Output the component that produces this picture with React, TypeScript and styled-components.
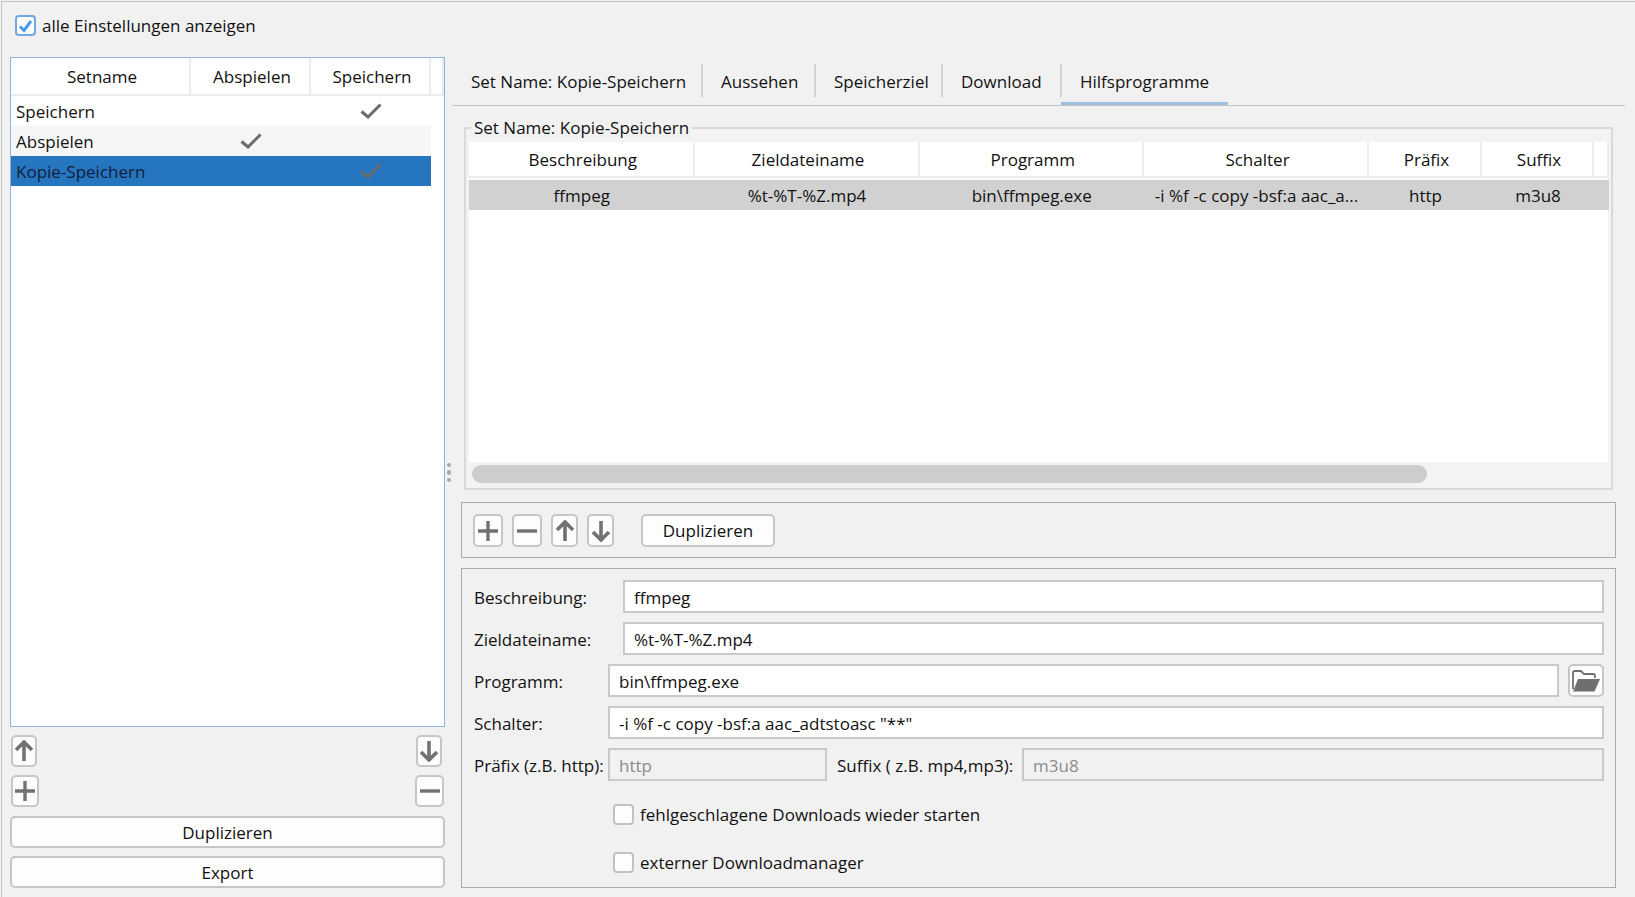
import styled, { createGlobalStyle } from 'styled-components';

const GlobalStyle = createGlobalStyle`
  html, body {
    margin: 0;
    padding: 0;
    background: #f1f1f1;
  }
  body {
    font-family: "Open Sans", "Liberation Sans", sans-serif;
    font-size: 17px;
    color: #111;
  }
  * { box-sizing: border-box; }
`;

const CheckMark = () => (
  <svg width="22" height="16" viewBox="0 0 22 16">
    <path d="M1.5 8.5 L8 14 L20.5 1.5" fill="none" stroke="#6b6b6b" strokeWidth="3" />
  </svg>
);

const ArrowIcon = ({ down }: { down?: boolean }) => (
  <svg width="20" height="22" viewBox="0 0 20 22">
    <path
      d={down ? 'M10 1 V20 M2 12 L10 20 L18 12' : 'M10 21 V2 M2 10 L10 2 L18 10'}
      fill="none"
      stroke="#727272"
      strokeWidth="3.6"
    />
  </svg>
);

const PlusIcon = () => (
  <svg width="22" height="22" viewBox="0 0 22 22">
    <path d="M1 11 H21 M11 1 V21" fill="none" stroke="#727272" strokeWidth="3.4" />
  </svg>
);

const MinusIcon = () => (
  <svg width="22" height="22" viewBox="0 0 22 22">
    <path d="M1 11 H21" fill="none" stroke="#727272" strokeWidth="3.4" />
  </svg>
);

const FolderIcon = () => (
  <svg width="28" height="22" viewBox="0 0 28 22">
    <path d="M1 19 V3 Q1 1 3 1 H9 L12 4 H21 Q23 4 23 6 V8" fill="none" stroke="#6f6f6f" strokeWidth="1.8" />
    <path d="M6 9 H28 L22.5 21.5 H1 Z" fill="#6f6f6f" />
  </svg>
);

const Page = styled.div`
  width: 1635px;
  height: 897px;
  overflow: hidden;
  border-top: 1px solid #c4c4c4;
  border-left: 1px solid #c4c4c4;
  margin-top: 1px;
  margin-left: 1px;
  display: flex;
  flex-direction: column;
`;

const TopBar = styled.div`
  height: 55px;
  flex: none;
  padding: 13px 0 0 13px;
  display: flex;
  align-items: flex-start;
  gap: 6px;
  line-height: 22px;
`;

const Box = styled.span<{ $checked?: boolean }>`
  display: inline-flex;
  align-items: center;
  justify-content: center;
  flex: none;
  width: 21px;
  height: 21px;
  border-radius: 4px;
  background: #fdfdfd;
  border: 2px solid ${(p) => (p.$checked ? '#6fa8e6' : '#c2c2c2')};
`;

const Body = styled.div`
  display: flex;
  padding-left: 8px;
  flex: none;
  height: 838px;
`;

const LeftPane = styled.div`
  width: 435px;
  display: flex;
  flex-direction: column;
`;

const SetTable = styled.div`
  height: 670px;
  flex: none;
  border: 1px solid #8db2df;
  background: #fff;
`;

const GridRow = styled.div<{ $cols: string }>`
  display: grid;
  grid-template-columns: ${(p) => p.$cols};
`;

const HeaderCell = styled.div<{ $height: number; $shift: number; $drop?: number }>`
  height: ${(p) => p.$height}px;
  padding: ${(p) => p.$drop ?? 0}px 0 0 ${(p) => p.$shift}px;
  display: flex;
  align-items: center;
  justify-content: center;
  border-right: 2px solid #ececec;
  border-bottom: 2px solid #ececec;
  white-space: nowrap;
`;

const SetRow = styled.div<{ $selected?: boolean; $alt?: boolean }>`
  display: grid;
  grid-template-columns: 179px 120px 120px;
  width: 420px;
  height: 30px;
  background: ${(p) => (p.$selected ? '#2675bf' : p.$alt ? '#f6f6f6' : '#fff')};
  color: ${(p) => (p.$selected ? '#11203a' : '#111')};
`;

const SetName = styled.div`
  padding-left: 5px;
  display: flex;
  align-items: center;
`;

const CheckCell = styled.div`
  display: flex;
  align-items: center;
  justify-content: center;
  padding-left: 2px;
`;

const ButtonRow = styled.div<{ $top: number; $pad: string }>`
  display: flex;
  flex: none;
  justify-content: space-between;
  margin-top: ${(p) => p.$top}px;
  padding: ${(p) => p.$pad};
`;

const IconButton = styled.button<{ $w: number; $h?: number }>`
  width: ${(p) => p.$w}px;
  height: ${(p) => p.$h ?? 33}px;
  padding: 0;
  display: flex;
  align-items: center;
  justify-content: center;
  flex: none;
  background: #fdfdfd;
  border: 2px solid #c6c6c6;
  border-radius: 5px;
`;

const TextButton = styled.button<{ $w?: number; $h?: number; $top?: number; $left?: number }>`
  width: ${(p) => (p.$w ? `${p.$w}px` : '100%')};
  height: ${(p) => p.$h ?? 33}px;
  margin-top: ${(p) => p.$top ?? 0}px;
  margin-left: ${(p) => p.$left ?? 0}px;
  padding: 0;
  flex: none;
  font: inherit;
  color: inherit;
  background: #fdfdfd;
  border: 2px solid #c6c6c6;
  border-radius: 5px;
`;

const Splitter = styled.div`
  width: 7px;
  height: 831px;
  display: flex;
  flex-direction: column;
  align-items: center;
  justify-content: center;
  gap: 3px;
  padding-left: 1px;
`;

const Dot = styled.span`
  width: 4.5px;
  height: 4.5px;
  border-radius: 50%;
  background: #a9a9a9;
`;

const RightPane = styled.div`
  width: 1173px;
  padding-top: 7px;
`;

const TabBar = styled.div`
  display: flex;
  height: 42px;
  padding-left: 1px;
  border-bottom: 1px solid #c4c4c4;
`;

const Tab = styled.div<{ $w: number; $active?: boolean }>`
  position: relative;
  width: ${(p) => p.$w}px;
  height: 33px;
  padding: 2px 0 0 18px;
  display: flex;
  align-items: center;
  white-space: nowrap;
  border-right: ${(p) => (p.$active ? 'none' : '2px solid #d2d2d2')};

  ${(p) =>
    p.$active &&
    `&::after {
      content: '';
      position: absolute;
      left: -1px;
      right: 1px;
      bottom: -8px;
      height: 3px;
      background: #9dbfe2;
    }`}
`;

const GroupBox = styled.div`
  position: relative;
  margin: 21px 0 0 12px;
  width: 1149px;
  height: 363px;
  padding: 13px 3px 0;
  border: 2px solid #d9d9d9;
  background: #f3f3f3;
`;

const GroupTitle = styled.span`
  position: absolute;
  top: -12px;
  left: 5px;
  padding: 0 3px;
  line-height: 22px;
  background: #f1f1f1;
`;

const ToolTable = styled.div`
  height: 320px;
  background: #fff;
`;

const ToolRow = styled.div`
  display: grid;
  grid-template-columns: 225.5px 225px 224.5px 225px 113px 112px;
  width: 1140px;
  height: 30px;
  margin-top: 2px;
  background: #d1d1d1;
`;

const ToolCell = styled.div`
  display: flex;
  align-items: center;
  justify-content: center;
  overflow: hidden;
  white-space: nowrap;
`;

const ScrollTrack = styled.div`
  padding: 3px 0 0 3px;
`;

const ScrollThumb = styled.div`
  width: 955px;
  height: 18px;
  border-radius: 9px;
  background: #cdcdcd;
`;

const Panel = styled.div<{ $top: number }>`
  margin: ${(p) => p.$top}px 0 0 9px;
  width: 1155px;
  border: 1px solid #ababab;
`;

const Toolbar = styled(Panel)`
  height: 56px;
  padding: 11px;
  display: flex;
  gap: 9px;
`;

const Form = styled(Panel)`
  height: 320px;
  padding: 11px 11px 0 12px;
  display: flex;
  flex-direction: column;
  gap: 9px;
`;

const FormRow = styled.div`
  display: flex;
  align-items: stretch;
  gap: 9px;
`;

const Label = styled.label<{ $w: number; $left?: number }>`
  width: ${(p) => p.$w}px;
  margin: 0 -9px 0 ${(p) => p.$left ?? 0}px;
  padding-top: 1px;
  flex: none;
  display: flex;
  align-items: center;
  white-space: nowrap;
`;

const Field = styled.div<{ $disabled?: boolean; $w?: number }>`
  height: 33px;
  padding: 1px 0 0 9px;
  display: flex;
  align-items: center;
  white-space: nowrap;
  ${(p) => (p.$w ? `width: ${p.$w}px; flex: none;` : 'flex: 1;')}
  background: ${(p) => (p.$disabled ? '#f1f1f1' : '#fff')};
  color: ${(p) => (p.$disabled ? '#8c8c8c' : '#111')};
  border: 2px solid #c9c9c9;
`;

const CheckRow = styled.label<{ $top: number }>`
  display: flex;
  align-items: center;
  gap: 6px;
  height: 21px;
  margin: ${(p) => p.$top}px 0 0 139px;
  white-space: nowrap;
`;

const tabs = [
  { label: 'Set Name: Kopie-Speichern', width: 250 },
  { label: 'Aussehen', width: 113 },
  { label: 'Speicherziel', width: 127 },
  { label: 'Download', width: 119 },
  { label: 'Hilfsprogramme', width: 167, active: true },
];

const sets = [
  { name: 'Speichern', play: false, save: true },
  { name: 'Abspielen', play: true, save: false, alt: true },
  { name: 'Kopie-Speichern', play: false, save: true, selected: true },
];

const toolHeaders = ['Beschreibung', 'Zieldateiname', 'Programm', 'Schalter', 'Präfix', 'Suffix', ''];
const toolValues = ['ffmpeg', '%t-%T-%Z.mp4', 'bin\\ffmpeg.exe', '-i %f -c copy -bsf:a aac_a...', 'http', 'm3u8'];

export default function App() {
  return (
    <>
      <GlobalStyle />
      <Page>
        <TopBar>
          <Box $checked>
            <svg width="15" height="14" viewBox="0 0 15 14">
              <path d="M2 7.5 L6 11.5 L13 2" fill="none" stroke="#4a9bf0" strokeWidth="3" />
            </svg>
          </Box>
          alle Einstellungen anzeigen
        </TopBar>
        <Body>
          <LeftPane>
            <SetTable>
              <GridRow $cols="180px 120px 120px 13px">
                {['Setname', 'Abspielen', 'Speichern', ''].map((h, i) => (
                  <HeaderCell key={i} $height={38} $shift={4}>{h}</HeaderCell>
                ))}
              </GridRow>
              {sets.map((s) => (
                <SetRow key={s.name} $alt={s.alt} $selected={s.selected}>
                  <SetName>{s.name}</SetName>
                  <CheckCell>{s.play && <CheckMark />}</CheckCell>
                  <CheckCell>{s.save && <CheckMark />}</CheckCell>
                </SetRow>
              ))}
            </SetTable>
            <ButtonRow $top={8} $pad="0 3px 0 1px">
              <IconButton $w={26} $h={32}><ArrowIcon /></IconButton>
              <IconButton $w={26} $h={32}><ArrowIcon down /></IconButton>
            </ButtonRow>
            <ButtonRow $top={8} $pad="0 1px 0 1px">
              <IconButton $w={28} $h={32}><PlusIcon /></IconButton>
              <IconButton $w={29} $h={32}><MinusIcon /></IconButton>
            </ButtonRow>
            <TextButton $h={32} $top={9}>Duplizieren</TextButton>
            <TextButton $h={32} $top={8}>Export</TextButton>
          </LeftPane>
          <Splitter>
            <Dot />
            <Dot />
            <Dot />
          </Splitter>
          <RightPane>
            <TabBar>
              {tabs.map((t) => (
                <Tab key={t.label} $w={t.width} $active={t.active}>{t.label}</Tab>
              ))}
            </TabBar>
            <GroupBox>
              <GroupTitle>Set Name: Kopie-Speichern</GroupTitle>
              <ToolTable>
                <GridRow $cols="225.5px 225px 224.5px 225px 113px 112px 15px">
                  {toolHeaders.map((h, i) => (
                    <HeaderCell key={i} $height={36} $shift={4} $drop={1}>{h}</HeaderCell>
                  ))}
                </GridRow>
                <ToolRow>
                  {toolValues.map((v) => (
                    <ToolCell key={v}>{v}</ToolCell>
                  ))}
                </ToolRow>
              </ToolTable>
              <ScrollTrack>
                <ScrollThumb />
              </ScrollTrack>
            </GroupBox>
            <Toolbar $top={12}>
              <IconButton $w={30}><PlusIcon /></IconButton>
              <IconButton $w={30}><MinusIcon /></IconButton>
              <IconButton $w={27}><ArrowIcon /></IconButton>
              <IconButton $w={27}><ArrowIcon down /></IconButton>
              <TextButton $w={134} $left={18}>Duplizieren</TextButton>
            </Toolbar>
            <Form $top={10}>
              <FormRow>
                <Label $w={149}>Beschreibung:</Label>
                <Field>ffmpeg</Field>
              </FormRow>
              <FormRow>
                <Label $w={149}>Zieldateiname:</Label>
                <Field>%t-%T-%Z.mp4</Field>
              </FormRow>
              <FormRow>
                <Label $w={134}>Programm:</Label>
                <Field>bin\ffmpeg.exe</Field>
                <IconButton $w={36}><FolderIcon /></IconButton>
              </FormRow>
              <FormRow>
                <Label $w={134}>Schalter:</Label>
                <Field>-i %f -c copy -bsf:a aac_adtstoasc "**"</Field>
              </FormRow>
              <FormRow>
                <Label $w={134}>Präfix (z.B. http):</Label>
                <Field $disabled $w={219}>http</Field>
                <Label $w={185} $left={1}>Suffix ( z.B. mp4,mp3):</Label>
                <Field $disabled>m3u8</Field>
              </FormRow>
              <CheckRow $top={14}>
                <Box />
                fehlgeschlagene Downloads wieder starten
              </CheckRow>
              <CheckRow $top={18}>
                <Box />
                externer Downloadmanager
              </CheckRow>
            </Form>
          </RightPane>
        </Body>
      </Page>
    </>
  );
}
